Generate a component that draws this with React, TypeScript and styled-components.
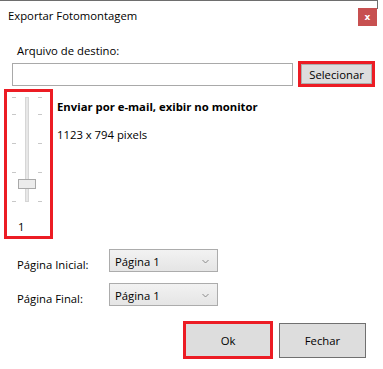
import React from 'react';
import styled, { createGlobalStyle } from 'styled-components';

const GlobalStyle = createGlobalStyle`
  html, body { margin: 0; padding: 0; background: #ffffff; }
  body {
    font-family: "Open Sans", "Noto Sans", Arial, sans-serif;
    font-size: 11.3px;
    color: #000000;
  }
  * { box-sizing: border-box; }
`;

const Window = styled.div`
  position: relative;
  width: 378px;
  height: 369px;
  background: #ffffff;
  border-top: 1px solid #6e6e6e;
  &::after {
    content: '';
    position: absolute;
    right: 0;
    top: -1px;
    width: 1px;
    height: 9px;
    background: #6e6e6e;
  }
`;

const TitleBar = styled.div`
  display: flex;
  align-items: flex-start;
  justify-content: space-between;
  height: 32px;
  padding: 0 1px 0 8px;
`;

const Title = styled.div`
  margin-top: 7px;
  line-height: 15px;
`;

const CloseButton = styled.div`
  margin-top: 7px;
  width: 19px;
  height: 18px;
  background: #c75050;
  color: #ffffff;
  font-family: "DejaVu Sans", Verdana, sans-serif;
  font-weight: bold;
  font-size: 9px;
  display: flex;
  align-items: center;
  justify-content: center;
  padding-bottom: 1px;
`;

const FieldLabel = styled.div`
  margin: 10px 0 0 17px;
  line-height: 15px;
`;

const FileRow = styled.div`
  display: flex;
  align-items: center;
  gap: 5px;
  margin: 3px 0 0 12px;
  height: 26px;
`;

const PathInput = styled.div`
  width: 281px;
  height: 23px;
  border: 1px solid #a9a9a9;
  background: #ffffff;
`;

const Highlight = styled.div<{ $w: number; $h: number }>`
  display: flex;
  width: ${p => p.$w}px;
  height: ${p => p.$h}px;
  border: 3px solid #ec1c24;
`;

const Button = styled.div<{ $edge?: string; $w?: number; $h?: number }>`
  display: flex;
  align-items: center;
  justify-content: center;
  flex: ${p => (p.$w ? '0 0 auto' : '1 1 auto')};
  width: ${p => (p.$w ? `${p.$w}px` : 'auto')};
  height: ${p => (p.$h ? `${p.$h}px` : 'auto')};
  background: #dddddd;
  border: 1px solid ${p => p.$edge ?? '#707070'};
  line-height: 15px;
`;

const MainSection = styled.div`
  display: flex;
  align-items: flex-start;
  margin-top: 2px;
  padding-left: 4px;
`;

const SliderFrame = styled.div`
  display: flex;
  flex-direction: column;
  width: 49px;
  height: 150px;
  border: 3px solid #ec1c24;
`;

const TrackArea = styled.div`
  position: relative;
  height: 127px;
`;

const Track = styled.div`
  position: absolute;
  left: 18px;
  top: 5px;
  width: 4px;
  height: 105px;
  background: #e7e7e7;
  border: 1px solid #d6d6d6;
`;

const Tick = styled.div<{ $side: 'left' | 'right' }>`
  position: absolute;
  left: ${p => (p.$side === 'left' ? 5 : 31)}px;
  width: 4px;
  height: 1px;
  background: #c8c8c8;
`;

const Thumb = styled.div`
  position: absolute;
  left: 11px;
  width: 18px;
  height: 10px;
  background: #ececec;
  border: 1px solid #a9a9a9;
`;

const ValueLabel = styled.div`
  margin-left: 11px;
  line-height: 15px;
`;

const InfoColumn = styled.div`
  display: flex;
  flex-direction: column;
  gap: 13px;
  margin-left: 4px;
  padding-top: 10px;
  line-height: 15px;
`;

const InfoTitle = styled.div`
  font-weight: 700;
`;

const PageRows = styled.div`
  display: flex;
  flex-direction: column;
  gap: 11px;
  margin-top: 10px;
  padding-left: 17px;
`;

const PageRow = styled.div`
  display: flex;
  align-items: flex-start;
`;

const PageLabel = styled.div`
  width: 92px;
  padding-top: 8px;
  line-height: 15px;
`;

const Combo = styled.div`
  display: flex;
  align-items: center;
  justify-content: space-between;
  width: 109px;
  height: 23px;
  padding: 2px 8px 0 5px;
  border: 1px solid #acacac;
  background: linear-gradient(#f2f2f2, #e5e5e5);
  line-height: 15px;
`;

const ButtonRow = styled.div`
  display: flex;
  align-items: center;
  justify-content: flex-end;
  gap: 6px;
  margin-top: 15px;
  padding-right: 12px;
`;

const Chevron = () => (
  <svg width="7" height="5" viewBox="0 0 7 5">
    <path d="M0.5 1 L3.5 4 L6.5 1" fill="none" stroke="#8a8a8a" strokeWidth="1" />
  </svg>
);

const ticks = [5, 22, 51, 80, 109];

export default function App() {
  return (
    <>
      <GlobalStyle />
      <Window>
        <TitleBar>
          <Title>Exportar Fotomontagem</Title>
          <CloseButton>x</CloseButton>
        </TitleBar>
        <FieldLabel>Arquivo de destino:</FieldLabel>
        <FileRow>
          <PathInput />
          <Highlight $w={77} $h={26}>
            <Button $edge="#adadad">Selecionar</Button>
          </Highlight>
        </FileRow>
        <MainSection>
          <SliderFrame>
            <TrackArea>
              <Track />
              {ticks.map(t => (
                <React.Fragment key={t}>
                  <Tick $side="left" style={{ top: t }} />
                  <Tick $side="right" style={{ top: t }} />
                </React.Fragment>
              ))}
              <Thumb style={{ top: 87 }} />
            </TrackArea>
            <ValueLabel>1</ValueLabel>
          </SliderFrame>
          <InfoColumn>
            <InfoTitle>Enviar por e-mail, exibir no monitor</InfoTitle>
            <div>1123 x 794 pixels</div>
          </InfoColumn>
        </MainSection>
        <PageRows>
          <PageRow>
            <PageLabel>Página Inicial:</PageLabel>
            <Combo>
              <span>Página 1</span>
              <Chevron />
            </Combo>
          </PageRow>
          <PageRow>
            <PageLabel>Página Final:</PageLabel>
            <Combo>
              <span>Página 1</span>
              <Chevron />
            </Combo>
          </PageRow>
        </PageRows>
        <ButtonRow>
          <Highlight $w={90} $h={38}>
            <Button $edge="#dddddd">Ok</Button>
          </Highlight>
          <Button $w={87} $h={35}>Fechar</Button>
        </ButtonRow>
      </Window>
    </>
  );
}
